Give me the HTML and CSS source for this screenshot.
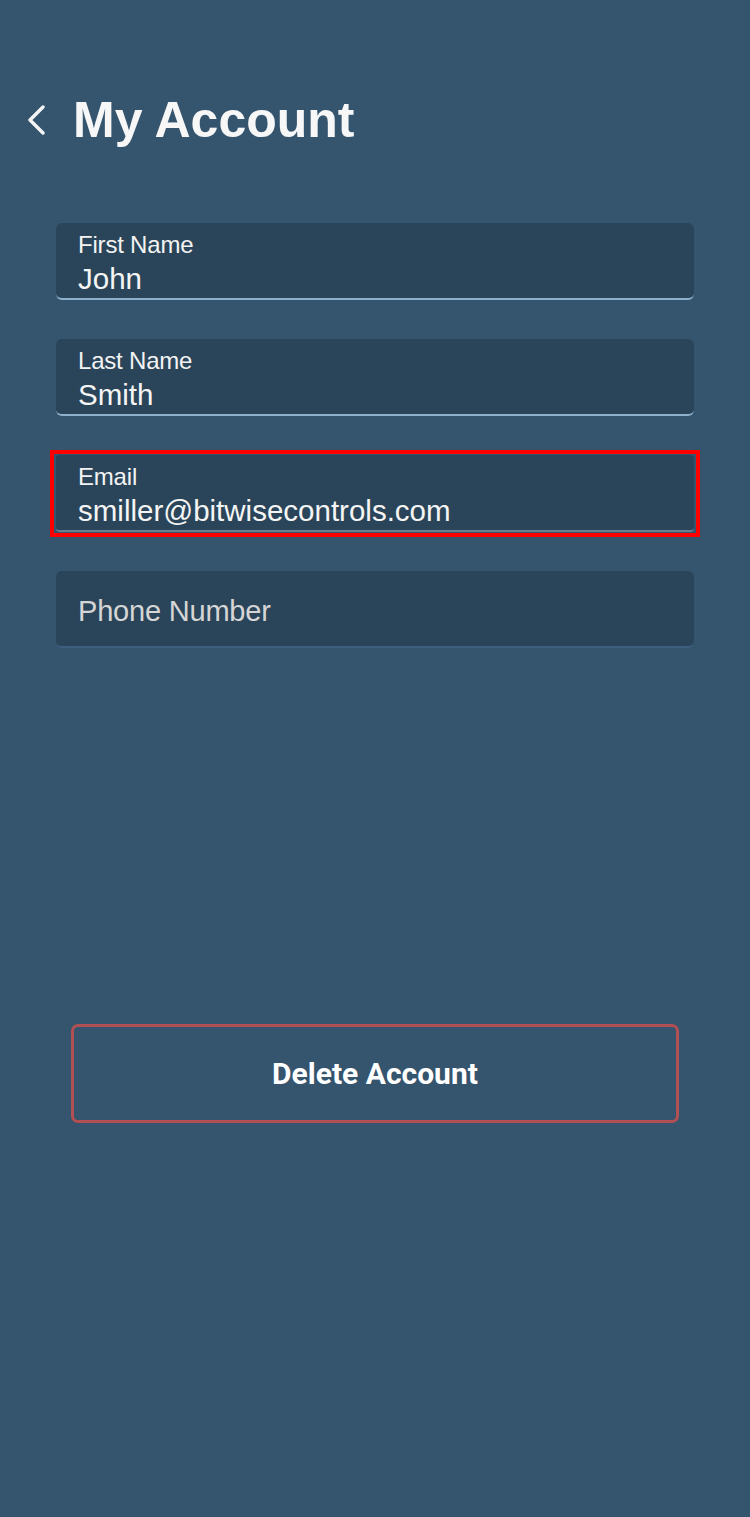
FILE: index.html
```html
<!DOCTYPE html>
<html>
<head>
<meta charset="utf-8">
<link rel="stylesheet" href="styles.css">
</head>
<body>
<div class="screen">
  <header class="header">
    <svg class="back" width="22" height="30" viewBox="0 0 22 30"><path d="M18 2 L5 15 L18 28" fill="none" stroke="#f5f5f5" stroke-width="3.4" stroke-linecap="round" stroke-linejoin="round"/></svg>
    <h1 class="title">My Account</h1>
  </header>
  <div class="fields">
    <div class="field filled">
      <div class="label">First Name</div>
      <div class="value">John</div>
    </div>
    <div class="field filled">
      <div class="label">Last Name</div>
      <div class="value">Smith</div>
    </div>
    <div class="field filled focus">
      <div class="label">Email</div>
      <div class="value">smiller@bitwisecontrols.com</div>
    </div>
    <div class="field empty">
      <div class="placeholder">Phone Number</div>
    </div>
  </div>
  <div class="actions">
    <button class="delete">Delete Account</button>
  </div>
</div>
</body>
</html>
```
FILE: styles.css
```css
html, body {
  margin: 0;
  padding: 0;
  background: #35546e;
}
.screen {
  width: 750px;
  height: 1517px;
  background: #35546e;
  font-family: "Liberation Sans", Arial, sans-serif;
  color: #f5f5f5;
  overflow: hidden;
}
.header {
  display: flex;
  align-items: center;
  padding: 91px 0 0 25px;
  height: 58px;
}
.back {
  display: block;
  margin-right: 26px;
}
.title {
  margin: 0;
  font-size: 50px;
  font-weight: bold;
  line-height: 58px;
  color: #f7f7f7;
}
.fields {
  display: flex;
  flex-direction: column;
  gap: 39px;
  padding: 74px 56px 0 56px;
}
.field {
  position: relative;
  height: 77px;
  box-sizing: border-box;
  background: #2a4559;
  border-radius: 6px;
  padding: 7px 22px 0 22px;
  border-bottom: 2px solid #90b1cc;
}
.field.focus {
  border-bottom-color: #6c7f8f;
  border-radius: 4px;
}
.field.focus::before {
  content: "";
  position: absolute;
  left: -6px;
  right: -6px;
  top: -5px;
  bottom: -7px;
  border: 4px solid #ff0000;
  pointer-events: none;
}
.field.empty {
  border-bottom-color: #3c5f7e;
  display: flex;
  align-items: center;
  padding-top: 5px;
}
.label {
  font-size: 24px;
  line-height: 29px;
  letter-spacing: -0.2px;
  color: #f3f3f3;
}
.value {
  font-size: 29.5px;
  line-height: 39px;
  color: #f5f5f5;
}
.placeholder {
  font-size: 29px;
  letter-spacing: -0.2px;
  color: #d6d6d6;
}
.actions {
  padding: 376px 71px 0 71px;
}
.delete {
  width: 608px;
  height: 99px;
  box-sizing: border-box;
  background: transparent;
  border: 3px solid #b24f52;
  border-radius: 7px;
  color: #ffffff;
  font-family: Roboto, "Liberation Sans", sans-serif;
  font-weight: bold;
  font-size: 30px;
  cursor: pointer;
}
```
